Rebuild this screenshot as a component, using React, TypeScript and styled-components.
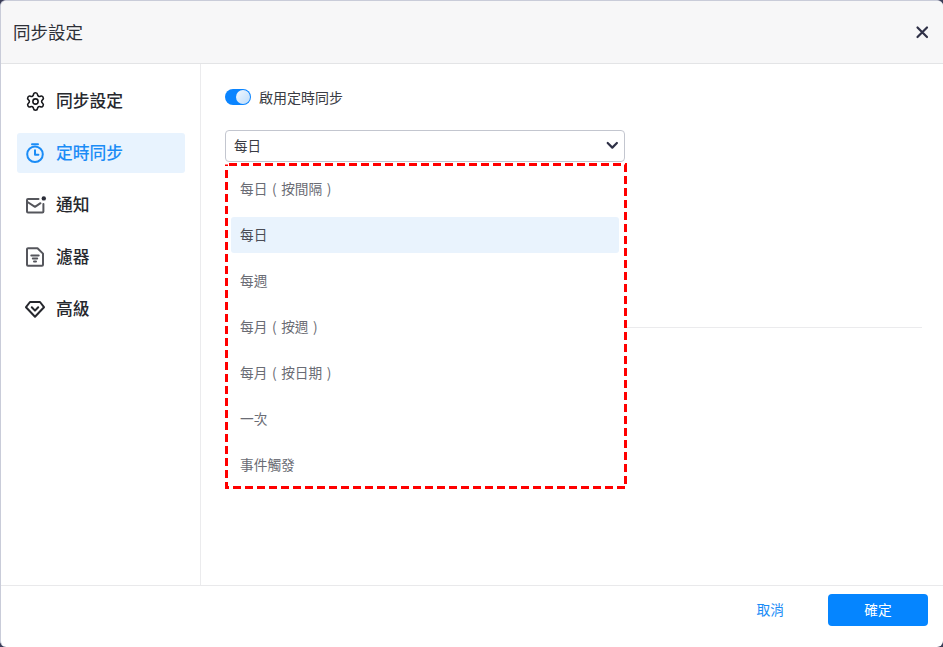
import React from "react";
import styled, { createGlobalStyle } from "styled-components";
import { Settings } from "lucide-react";

const Global = createGlobalStyle`
  html, body { margin: 0; padding: 0; height: 100%; background: #3a3d58; }
  #root { height: 100%; }
  * { box-sizing: border-box; }
  body { font-family: "Noto Sans CJK TC", "Noto Sans", sans-serif; overflow: hidden; }
`;

const Dialog = styled.div`
  width: 943px;
  height: 647px;
  background: #fff;
  border-radius: 6px;
  border-top: 1px solid #c9ccd9;
  border-left: 1px solid #c9ccd9;
  display: flex;
  flex-direction: column;
  overflow: hidden;
`;

const Header = styled.header`
  height: 63px;
  flex: none;
  background: #f7f7f8;
  border-bottom: 1px solid #e3e4e6;
  display: flex;
  align-items: center;
  justify-content: space-between;
  padding: 0 13px 0 12px;
`;

const Title = styled.h1`
  margin: 0;
  font-size: 17.5px;
  font-weight: 400;
  line-height: 24px;
  color: #2e3038;
`;

const CloseButton = styled.button`
  width: 16px;
  height: 16px;
  padding: 0;
  border: 0;
  background: none;
  color: #2f3147;
  display: flex;
`;

const Body = styled.div`
  flex: 1;
  display: flex;
  min-height: 0;
`;

const Sidebar = styled.nav`
  width: 200px;
  flex: none;
  border-right: 1px solid #ebebed;
  padding: 17px 15px 0 16px;
  display: flex;
  flex-direction: column;
  gap: 12px;
`;

const NavItem = styled.div<{ $active?: boolean }>`
  height: 40px;
  border-radius: 3px;
  padding-left: 9px;
  display: flex;
  align-items: center;
  gap: 12px;
  font-size: 16.8px;
  font-weight: 500;
  background: ${(p) => (p.$active ? "#e8f3fe" : "transparent")};
  color: ${(p) => (p.$active ? "#1b8cf6" : "#26282e")};
`;

const NavIconSlot = styled.span`
  width: 18px;
  height: 20px;
  flex: none;
  display: flex;
  align-items: center;
  justify-content: center;
  svg {
    flex: none;
    overflow: visible;
  }
`;

const NavLabel = styled.span`
  padding-bottom: 2px;
`;

const Content = styled.main`
  flex: 1;
  position: relative;
  padding: 25px 21px 0 24px;
`;

const ToggleRow = styled.div`
  display: flex;
  align-items: center;
  gap: 8px;
  height: 16px;
  font-size: 14px;
  color: #3a3c44;
`;

const Toggle = styled.span`
  width: 26px;
  height: 16px;
  border-radius: 8px;
  background: #0a84ff;
  position: relative;
  &::after {
    content: "";
    position: absolute;
    right: 1px;
    top: 1px;
    width: 14px;
    height: 14px;
    border-radius: 50%;
    background: linear-gradient(135deg, #f2f8ff, #bcdcfb);
  }
`;

const Select = styled.div`
  width: 400px;
  height: 32px;
  margin-top: 25px;
  border: 1px solid #c3c6cf;
  border-radius: 4px;
  padding: 0 5px 2px 8px;
  display: flex;
  align-items: center;
  justify-content: space-between;
  font-size: 13.5px;
  color: #3a3c44;
`;

const Divider = styled.hr`
  margin: 165px 0 0;
  border: 0;
  border-top: 1px solid #ebebed;
`;

const Menu = styled.ul`
  position: absolute;
  left: 24px;
  top: 100px;
  width: 400px;
  height: 325px;
  margin: 0;
  padding: 7px 6px 0;
  list-style: none;
  background: #fff;
  display: flex;
  flex-direction: column;
  gap: 10px;
`;

const MenuItem = styled.li<{ $selected?: boolean }>`
  height: 36px;
  flex: none;
  border-radius: 3px;
  padding: 0 0 2px 9px;
  display: flex;
  align-items: center;
  font-size: 13.7px;
  word-spacing: 1.5px;
  white-space: pre;
  color: ${(p) => (p.$selected ? "#4a4c55" : "#6a6c74")};
  background: ${(p) => (p.$selected ? "#e9f3fd" : "transparent")};
`;

const Annotation = styled.svg`
  position: absolute;
  left: 24px;
  top: 99px;
  width: 402px;
  height: 326px;
  pointer-events: none;
`;

const Footer = styled.footer`
  height: 62px;
  flex: none;
  border-top: 1px solid #e9e9eb;
  display: flex;
  align-items: center;
  justify-content: flex-end;
  padding: 0 15px 14px 0;
  gap: 44px;
`;

const TextButton = styled.button`
  border: 0;
  background: none;
  padding: 0 0 2px;
  font: inherit;
  font-size: 13.7px;
  color: #1b8cf6;
`;

const PrimaryButton = styled.button`
  width: 100px;
  height: 32px;
  border: 0;
  border-radius: 4px;
  padding: 0 0 2px;
  background: #0585ff;
  color: #fff;
  font: inherit;
  font-size: 13.7px;
`;

const TimerIcon = () => (
  <svg width="18" height="20" viewBox="0 0 18 20" fill="none" stroke="currentColor" strokeWidth="2" strokeLinecap="round" strokeLinejoin="round">
    <circle cx="9" cy="11.3" r="7.8" />
    <path d="M6 1.2h6M9 7.2v4.6h3.4" />
  </svg>
);

const MailIcon = () => (
  <svg width="20" height="18" viewBox="0 0 20 18" fill="none" style={{ transform: "translateX(1px)" }}>
    <path
      d="M12.5 3H2a1 1 0 0 0-1 1v11.4a1 1 0 0 0 1 1h14.4a1 1 0 0 0 1-1V8M1.5 6 9 10.8l5.5-3.6"
      stroke="#55565c"
      strokeWidth="2"
      strokeLinecap="round"
      strokeLinejoin="round"
    />
    <circle cx="17.8" cy="2.4" r="2.2" fill="#2b2d38" />
  </svg>
);

const FilterFileIcon = () => (
  <svg width="18" height="20" viewBox="0 0 18 20" fill="none" stroke="#55565c" strokeWidth="2" strokeLinecap="round" strokeLinejoin="round">
    <path d="M2 1.2h9.5L17 6.6V17.8a1 1 0 0 1-1 1H2a1 1 0 0 1-1-1V2.2a1 1 0 0 1 1-1z" />
    <path d="M5.3 8.5h7.4M6.8 11.5h4.4M8 14.5h2" />
  </svg>
);

const DiamondIcon = () => (
  <svg width="20" height="17" viewBox="0 0 20 17" fill="none" stroke="#26282e" strokeWidth="2" strokeLinecap="round" strokeLinejoin="round">
    <path d="M5 1h10l4 5.2L10 15.8 1 6.2z" />
    <path d="M6.8 6.2 10 9.6l3.2-3.4" />
  </svg>
);

const ChevronIcon = () => (
  <svg width="16" height="16" viewBox="0 0 16 16" fill="none" stroke="#2f3147" strokeWidth="2.2" strokeLinecap="round" strokeLinejoin="round">
    <path d="M4.7 6 9.3 10.6l4.6-4.6" />
  </svg>
);

const CloseIcon = () => (
  <svg width="16" height="16" viewBox="0 0 16 16" fill="none" stroke="currentColor" strokeWidth="2.2" strokeLinecap="round">
    <path d="M3.5 3.5l9.5 9.5M13 3.5 3.5 13" />
  </svg>
);

const navItems = [
  { label: "同步設定", icon: <Settings size={21} strokeWidth={1.8} color="#17181c" /> },
  { label: "定時同步", icon: <TimerIcon />, active: true },
  { label: "通知", icon: <MailIcon /> },
  { label: "濾器", icon: <FilterFileIcon /> },
  { label: "高級", icon: <DiamondIcon /> },
];

const menuItems = ["每日 ( 按間隔 )", "每日", "每週", "每月 ( 按週 )", "每月 ( 按日期 )", "一次", "事件觸發"];

export default function App() {
  return (
    <>
      <Global />
      <Dialog>
        <Header>
          <Title>同步設定</Title>
          <CloseButton aria-label="關閉">
            <CloseIcon />
          </CloseButton>
        </Header>
        <Body>
          <Sidebar>
            {navItems.map((item) => (
              <NavItem key={item.label} $active={item.active}>
                <NavIconSlot>{item.icon}</NavIconSlot>
                <NavLabel>{item.label}</NavLabel>
              </NavItem>
            ))}
          </Sidebar>
          <Content>
            <ToggleRow>
              <Toggle />
              <span>啟用定時同步</span>
            </ToggleRow>
            <Select>
              <span>每日</span>
              <ChevronIcon />
            </Select>
            <Divider />
            <Menu>
              {menuItems.map((item) => (
                <MenuItem key={item} $selected={item === "每日"}>
                  {item}
                </MenuItem>
              ))}
            </Menu>
            <Annotation viewBox="0 0 402 326">
              <rect x="1.5" y="1.5" width="399" height="323" fill="none" stroke="#f00" strokeWidth="3" strokeDasharray="8 4" strokeDashoffset="-2.5" />
            </Annotation>
          </Content>
        </Body>
        <Footer>
          <TextButton>取消</TextButton>
          <PrimaryButton>確定</PrimaryButton>
        </Footer>
      </Dialog>
    </>
  );
}
